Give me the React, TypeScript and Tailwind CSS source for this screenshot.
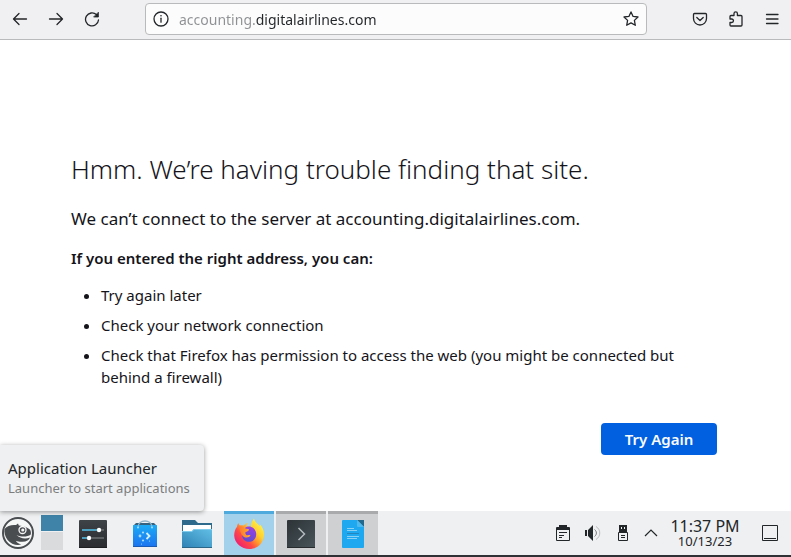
import type { ReactNode } from "react";
import { useState } from "react";
import clsx from "clsx";

interface IconButtonProps {
  label: string;
  className?: string;
  children: ReactNode;
}

function IconButton({ label, className, children }: IconButtonProps) {
  return (
    <button
      type="button"
      aria-label={label}
      className={clsx("flex shrink-0 items-center justify-center", className)}
    >
      {children}
    </button>
  );
}

const stroke = {
  fill: "none",
  stroke: "currentColor",
  strokeWidth: 1.3,
  strokeLinecap: "round",
  strokeLinejoin: "round",
} as const;

function BackIcon() {
  return (
    <svg width="16" height="16" viewBox="0 0 16 16" {...stroke}>
      <path d="M1.5 8h13M7 2.5 1.5 8 7 13.5" />
    </svg>
  );
}

function ForwardIcon() {
  return (
    <svg width="16" height="16" viewBox="0 0 16 16" {...stroke}>
      <path d="M14.5 8h-13M9 2.5 14.5 8 9 13.5" />
    </svg>
  );
}

function ReloadIcon() {
  return (
    <svg width="16" height="16" viewBox="0 0 16 16" {...stroke}>
      <path d="M12.4 3.6A6.5 6.5 0 1 0 14.5 9" />
      <path d="M14.4 1.6v4.4H10z" fill="currentColor" strokeWidth="0.8" />
    </svg>
  );
}

function InfoIcon() {
  return (
    <svg width="16" height="16" viewBox="0 0 16 16" {...stroke}>
      <circle cx="8" cy="8" r="7" />
      <path d="M8 7.2v4" />
      <circle cx="8" cy="4.8" r="0.8" fill="currentColor" stroke="none" />
    </svg>
  );
}

function StarIcon() {
  return (
    <svg width="16" height="16" viewBox="0 0 16 16" {...stroke}>
      <path d="m8 .9 2.1 4.5 4.9.6-3.6 3.4.9 4.9L8 11.9l-4.3 2.4.9-4.9L1 6l4.9-.6z" />
    </svg>
  );
}

function PocketIcon() {
  return (
    <svg width="16" height="16" viewBox="0 0 16 16" {...stroke}>
      <path d="M2.5 2.5h11c.6 0 1 .4 1 1v4a6.5 6.5 0 0 1-13 0v-4c0-.6.4-1 1-1z" />
      <path d="M4.8 6.5 8 9.5l3.2-3" />
    </svg>
  );
}

function ExtensionsIcon() {
  return (
    <svg width="16" height="16" viewBox="0 0 16 16" {...stroke}>
      <path d="M2 8V5.5c0-.6.4-1 1-1h3V2.6a1.7 1.7 0 0 1 3.4 0v1.9H13c.6 0 1 .4 1 1V14c0 .6-.4 1-1 1H3c-.6 0-1-.4-1-1v-2.5h1.7a1.75 1.75 0 0 0 0-3.5z" />
    </svg>
  );
}

function MenuIcon() {
  return (
    <svg width="16" height="16" viewBox="0 0 16 16" {...stroke}>
      <path d="M2.5 3.5H14M2.5 8H14M2.5 12.5H14" />
    </svg>
  );
}

function LauncherIcon() {
  return (
    <svg width="32" height="32" viewBox="0 0 32 32">
      <circle cx="16" cy="16" r="15" fill="#f6f7f7" stroke="#4a4d50" strokeWidth="2" />
      <path
        d="M2.500 12C5 8.500 9.500 7.600 14 8l2-1.600.8 2c4.500.4 8.400 1.800 11 4.200 1 1.300 1.400 3 1 4.800-3.500 2.600-9.300 2.800-14.300.6 3.600 3.400 8.800 4.400 13.500 2.400-.8 2.600-3.400 4.200-7.600 4.300-2.200.1-4.800-.1-6.600-.9 1 1.600 2.800 3 5.400 3.800-5 1.200-10.500-.6-13.600-4.600-2.700-3.500-3.600-7.500-3.100-11z"
        fill="#4a4d50"
      />
      <circle cx="20.500" cy="13" r="3.500" fill="none" stroke="#f6f7f7" strokeWidth="1.300" />
      <circle cx="20.800" cy="13" r="1.600" fill="#f6f7f7" />
    </svg>
  );
}

function SettingsIcon() {
  return (
    <svg width="28" height="28" viewBox="0 0 28 28">
      <defs>
        <linearGradient id="settings" x1="0" y1="0" x2="0" y2="1">
          <stop offset="0" stopColor="#3e4347" />
          <stop offset="1" stopColor="#2a2c2f" />
        </linearGradient>
      </defs>
      <rect width="28" height="28" rx="1" fill="url(#settings)" />
      <path d="M0 27h28v1H0z" fill="#1d1f20" />
      <path d="M3 10h17M3 18h7" stroke="#55c1ec" strokeWidth="1.5" />
      <path d="M22 10h3M10 18h15" stroke="#6c7073" strokeWidth="1.5" />
      <circle cx="20" cy="10" r="2.2" fill="#fff" />
      <circle cx="10" cy="18" r="2.2" fill="#fff" />
    </svg>
  );
}

function DiscoverIcon() {
  return (
    <svg width="24" height="28" viewBox="0 0 24 28">
      <defs>
        <linearGradient id="bag" x1="0" y1="0" x2="0" y2="1">
          <stop offset="0" stopColor="#1cabf5" />
          <stop offset="1" stopColor="#1b73f0" />
        </linearGradient>
      </defs>
      <path d="m0 6 3-3h18l3 3z" fill="#34627f" />
      <rect y="5" width="24" height="22" rx="1" fill="url(#bag)" />
      <path d="M0 26h24v1H0z" fill="#185bb5" />
      <path d="M5 7c0-8 14-8 14 0" fill="none" stroke="#8fb4c9" strokeWidth="1.3" />
      <g fill="#a7dcff">
        <circle cx="5" cy="7.5" r="1" />
        <circle cx="19" cy="7.5" r="1" />
        <circle cx="10" cy="12.5" r="1.1" />
        <circle cx="7" cy="16" r="1.4" />
        <circle cx="10" cy="20.5" r="1.1" />
        <circle cx="8.500" cy="24" r="0.6" />
        <circle cx="16.500" cy="21" r="0.6" />
      </g>
      <path d="m13.500 13 3 3-3 3" fill="none" stroke="#d6f1ff" strokeWidth="1.8" />
    </svg>
  );
}

function FolderIcon() {
  return (
    <svg width="30" height="28" viewBox="0 0 30 28">
      <defs>
        <linearGradient id="folder" x1="0" y1="1" x2="1" y2="0">
          <stop offset="0" stopColor="#2f83b5" />
          <stop offset="1" stopColor="#62bfe6" />
        </linearGradient>
      </defs>
      <path d="M0 0h13l3 3h14v10H0z" fill="#2d6a8c" />
      <path d="M1 5h28v8H1z" fill="#fff" />
      <path d="M0 11h10l2-2h18v18H0z" fill="url(#folder)" />
      <path d="M0 11h10l2-2h18v1H12l-2 2H0z" fill="#7fccec" />
      <path d="M0 27h30v1H0z" fill="#2b6587" />
    </svg>
  );
}

function FirefoxIcon() {
  return (
    <svg width="32" height="32" viewBox="0 0 32 32">
      <defs>
        <linearGradient id="fox" x1=".88" y1=".15" x2=".15" y2=".85">
          <stop offset="0" stopColor="#fff04a" />
          <stop offset=".3" stopColor="#ffd02e" />
          <stop offset=".5" stopColor="#ff9a2c" />
          <stop offset=".72" stopColor="#ff4a45" />
          <stop offset="1" stopColor="#f0246e" />
        </linearGradient>
        <linearGradient id="globe" x1=".7" y1="0" x2=".3" y2="1">
          <stop offset="0" stopColor="#9b3fe4" />
          <stop offset="1" stopColor="#5a4fd0" />
        </linearGradient>
        <linearGradient id="tail" x1="0" y1="0" x2="1" y2="0">
          <stop offset="0" stopColor="#ff7a2e" />
          <stop offset="1" stopColor="#ffae2c" />
        </linearGradient>
      </defs>
      <path
        d="M21 .5c.6 3.500 3.800 5 5.500 7.500.3-.5.3-1.100.1-1.700 3 2.700 4.600 6.400 4.400 10.700C30.600 25 24.500 31 16.500 31S1.600 25.200 1.200 17.700c-.1-3.500 1-6.700 2.800-9 .1-1.500.6-2.700 1.400-3.700.3 1.200.8 1.900 1.500 2.400 1.700-.4 3-.2 4.100.2.9-1.300 2.200-2.300 3.700-2.600-.8 1.100-1.100 2.200-1 3.200 1.500 0 3 .3 4.300.9C17.700 6.500 18.800 3.200 21 .5z"
        fill="url(#fox)"
      />
      <path
        d="M12.500 9.500c4-2.600 10 .2 10.600 5.500.6 5-2.600 8.800-7 8.800-3.800 0-7-2.600-7-6.600 0-1.500.4-2.800 1-3.700z"
        fill="url(#globe)"
      />
      <path
        d="M6.500 9c2.300-1 4.700-.2 6.300 1.800 1.500 0 3 .2 3.300 1-.3 1.300-2.300 2-3.500 2.300-.5 1-.2 2 .7 2.900 1.300.6 2.500-.3 4.200.3-.8 1.700-2.200 2.200-4.300 2.100-3 1-6.500-5-6.700-10.400z"
        fill="url(#tail)"
      />
    </svg>
  );
}

function TerminalIcon() {
  return (
    <svg width="28" height="28" viewBox="0 0 28 28">
      <defs>
        <linearGradient id="terminal" x1="0" y1="0" x2="1" y2="1">
          <stop offset="0" stopColor="#2d3337" />
          <stop offset="1" stopColor="#48555a" />
        </linearGradient>
      </defs>
      <rect width="28" height="28" rx="1" fill="url(#terminal)" />
      <path d="M0 27h28v1H0z" fill="#272b2d" />
      <path d="m11.500 8 6 6-6 6" fill="none" stroke="#b4babd" strokeWidth="1.5" />
    </svg>
  );
}

function DocumentIcon() {
  return (
    <svg width="22" height="28" viewBox="0 0 22 28">
      <path d="M1 0h14l7 7v20a1 1 0 0 1-1 1H1a1 1 0 0 1-1-1V1a1 1 0 0 1 1-1z" fill="#1ea8f0" />
      <path d="M15 0h7v7z" fill="#23698e" />
      <path d="m15 0 7 7h-6a1 1 0 0 1-1-1z" fill="#4db9ef" />
      <path d="M5 8.5h7M5 10.5h10M5 16.5h12M5 18.5h10" stroke="#8bd0f5" />
      <path d="M5 13.5h12" stroke="#2585bd" />
    </svg>
  );
}

function ClipboardIcon() {
  return (
    <svg width="16" height="18" viewBox="0 0 16 18" fill="none" stroke="#232629">
      <path d="M1.5 3.5h13v13h-13z" />
      <path d="M4 1h8v2h2v3H2V3h2z" fill="#232629" stroke="none" />
      <path d="M4 8.5h8M4 11.5h5M4 13.5h3" />
    </svg>
  );
}

function VolumeIcon() {
  return (
    <svg width="18" height="18" viewBox="0 0 18 18">
      <path d="M1 6h2v6H1zM4 6l5-5v16l-5-5z" fill="#232629" />
      <path d="M10.5 5.5c2.500 1.700 2.500 5.300 0 7" fill="none" stroke="#76797b" />
      <path d="M12 2.500c5 3 5 10 0 13" fill="none" stroke="#b9bbbd" />
    </svg>
  );
}

function UsbIcon() {
  return (
    <svg width="12" height="18" viewBox="0 0 12 18" fill="none" stroke="#232629">
      <path d="M2 1h8v7H2z" fill="#232629" stroke="none" />
      <path d="M4 3h1v2H4zM7 3h1v2H7z" fill="#eff0f1" stroke="none" />
      <path d="M1.5 8.5h9v8h-9zM4 11.5h4M4 13.5h4" />
    </svg>
  );
}

function CaretIcon() {
  return (
    <svg width="14" height="8" viewBox="0 0 14 8" fill="none" stroke="#232629" strokeWidth="1.2">
      <path d="M1 7l6-6 6 6" />
    </svg>
  );
}

function ShowDesktopIcon() {
  return (
    <svg width="16" height="16" viewBox="0 0 16 16" fill="none" stroke="#232629">
      <path d="M.5.5h15v15H.5zM2 13.5h12" />
    </svg>
  );
}

function BrowserToolbar() {
  const [url, setUrl] = useState("accounting.digitalairlines.com");

  return (
    <header className="flex h-10 items-start border-b border-[#b9babb] bg-[#f0f0f2] pt-[3px] pr-px pl-[2px] text-[#232629]">
      <nav className="flex h-8">
        <IconButton label="Back" className="w-9"><BackIcon /></IconButton>
        <IconButton label="Forward" className="w-9"><ForwardIcon /></IconButton>
        <IconButton label="Reload" className="w-9"><ReloadIcon /></IconButton>
      </nav>
      <div className="mx-[35px] flex h-8 min-w-0 flex-1 items-center rounded-[4px] border border-[#b9babb] bg-[#fcfcfc] pl-[7px]">
        <IconButton label="Site information"><InfoIcon /></IconButton>
        {/* subdomain is dimmed, the registered domain is not */}
        <input
          type="text"
          aria-label="Address"
          value={url}
          onChange={(e) => setUrl(e.target.value)}
          className="ml-[10px] h-7 min-w-0 flex-1 bg-[linear-gradient(90deg,#8e9093_77px,#232629_77px)] bg-clip-text text-[14px] text-transparent caret-[#232629] outline-none"
        />
        <IconButton label="Bookmark this page" className="w-[30px]"><StarIcon /></IconButton>
      </div>
      <div className="flex h-8">
        <IconButton label="Save to Pocket" className="w-9"><PocketIcon /></IconButton>
        <IconButton label="Extensions" className="w-9"><ExtensionsIcon /></IconButton>
        <IconButton label="Open menu" className="w-9"><MenuIcon /></IconButton>
      </div>
    </header>
  );
}

function ErrorPage() {
  return (
    <main className="flex-1 bg-white pt-[111px] pr-[74px] pb-14 pl-[71px] text-[#15141a]">
      <div className="mx-auto max-w-[646px]">
        <h1 className="text-[26px] leading-9 font-light">Hmm. We’re having trouble finding that site.</h1>
        <p className="mt-5 text-[17px] leading-6">
          We can’t connect to the server at accounting.digitalairlines.com.
        </p>
        <p className="mt-4 text-[15px] leading-[22px] font-semibold">
          If you entered the right address, you can:
        </p>
        <ul className="mt-[15px] list-disc space-y-2 pr-6 pl-[30px] text-[15px] leading-[22px]">
          <li>Try again later</li>
          <li>Check your network connection</li>
          <li>
            Check that Firefox has permission to access the web (you might be connected but behind a firewall)
          </li>
        </ul>
        <div className="mt-[35px] flex justify-end">
          <button
            type="button"
            className="h-8 w-[116px] rounded-[4px] bg-[#0060df] text-[15px] font-semibold text-[#fbfbfe]"
          >
            Try Again
          </button>
        </div>
      </div>
    </main>
  );
}

const tasks = [
  { name: "System Settings", icon: <SettingsIcon />, style: "border-transparent" },
  { name: "Discover", icon: <DiscoverIcon />, style: "border-transparent" },
  { name: "Files", icon: <FolderIcon />, style: "border-transparent" },
  { name: "Firefox", icon: <FirefoxIcon />, style: "border-[#4ea9dc] bg-[#a3d0ea]" },
  { name: "Terminal", icon: <TerminalIcon />, style: "border-[#a9aaab] bg-[#cfd0d1]" },
  { name: "Writer", icon: <DocumentIcon />, style: "border-[#a9aaab] bg-[#cfd0d1]" },
];

function Taskbar() {
  return (
    <footer className="relative flex h-[46px] items-stretch border-b-2 border-[#2f3134] bg-[#eff0f1] pr-[5px] pl-[2px] text-[#232629]">
      <IconButton label="Application Launcher" className="w-8"><LauncherIcon /></IconButton>
      <div className="ml-[7px] flex w-[22px] flex-col gap-px pt-1">
        <button type="button" aria-label="Desktop 1" className="h-4 bg-[#3f83a8]" />
        <button type="button" aria-label="Desktop 2" className="h-[18px] bg-[#dadbdc]" />
      </div>
      <div className="ml-[5px] flex gap-[2px]">
        {tasks.map((task) => (
          <IconButton
            key={task.name}
            label={task.name}
            className={clsx("w-[50px] border-t-3 pb-[2px]", task.style)}
          >
            {task.icon}
          </IconButton>
        ))}
      </div>
      <div className="ml-auto flex">
        <IconButton label="Clipboard" className="w-[30px]"><ClipboardIcon /></IconButton>
        <IconButton label="Volume" className="w-[30px]"><VolumeIcon /></IconButton>
        <IconButton label="Removable devices" className="w-[30px]"><UsbIcon /></IconButton>
        <IconButton label="Show hidden icons" className="w-[26px]"><CaretIcon /></IconButton>
        <button type="button" className="ml-1 flex w-[74px] flex-col items-center justify-center">
          <span className="text-[16px] leading-4">11:37 PM</span>
          <span className="text-[13px] leading-[14px]">10/13/23</span>
        </button>
        <IconButton label="Show desktop" className="ml-3 w-8"><ShowDesktopIcon /></IconButton>
      </div>
      <div
        role="tooltip"
        className="absolute bottom-full left-0 rounded-r-[4px] bg-[#eff0f1] pt-3 pr-[14px] pb-[14px] pl-2 shadow-[0_1px_5px_rgba(0,0,0,0.4)]"
      >
        <div className="text-[15px] leading-[22px]">Application Launcher</div>
        <div className="text-[13px] leading-[18px] text-[#7b7d7f]">Launcher to start applications</div>
      </div>
    </footer>
  );
}

export default function App() {
  return (
    <div className="flex min-h-screen flex-col font-['Noto_Sans',sans-serif]">
      <BrowserToolbar />
      <ErrorPage />
      <Taskbar />
    </div>
  );
}
